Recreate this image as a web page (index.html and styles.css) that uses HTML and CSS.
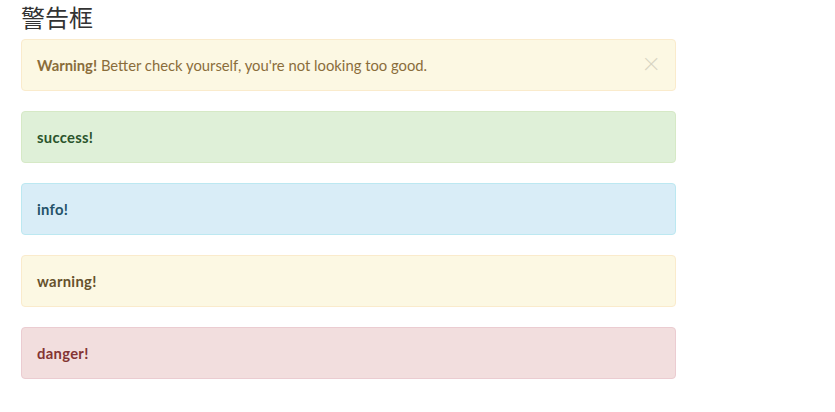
FILE: index.html
```html
<!DOCTYPE html>
<html>
<head>
<meta charset="utf-8">
<link rel="stylesheet" href="styles.css">
</head>
<body>
<div class="container">
  <h3 class="title">警告框</h3>
  <div class="alert alert-warning dismissible">
    <button class="close" type="button">×</button>
    <strong>Warning!</strong> Better check yourself, you're not looking too good.
  </div>
  <div class="alert alert-success"><a class="alert-link">success!</a></div>
  <div class="alert alert-info"><a class="alert-link">info!</a></div>
  <div class="alert alert-warning"><a class="alert-link">warning!</a></div>
  <div class="alert alert-danger"><a class="alert-link">danger!</a></div>
</div>
</body>
</html>
```
FILE: styles.css
```css
html, body { margin: 0; padding: 0; background: #fff; }
body {
  font-family: Lato, "Noto Sans CJK SC", sans-serif;
  font-size: 14.8px;
  line-height: 20px;
  color: #333;
}
.container {
  width: 655px;
  padding: 0 0 0 21px;
}
.title {
  font-family: "Noto Sans CJK SC", sans-serif;
  font-weight: 400;
  font-size: 24px;
  line-height: 34px;
  margin: 0 0 5px 0;
  color: #333;
}
.alert {
  padding: 15px;
  border: 1px solid transparent;
  border-radius: 4px;
  margin-bottom: 20px;
}
.alert-link { font-weight: 700; letter-spacing: 0.3px; }
.dismissible { padding-right: 35px; position: relative; }
.close {
  position: absolute;
  right: 15px;
  top: 12px;
  background: none;
  border: 0;
  padding: 0;
  font-family: Lato, sans-serif;
  font-size: 30px;
  line-height: 20px;
  font-weight: 300;
  color: #000;
  opacity: 0.14;
  cursor: pointer;
}
.alert strong { font-weight: 700; }
.alert-warning { background: #fcf8e3; border-color: #faebcc; color: #8a6d3b; }
.alert-warning .alert-link { color: #66512c; }
.alert-success { background: #dff0d8; border-color: #d6e9c6; color: #3c763d; }
.alert-success .alert-link { color: #2b542c; }
.alert-info { background: #d9edf7; border-color: #bce8f1; color: #31708f; }
.alert-info .alert-link { color: #245269; }
.alert-danger { background: #f2dede; border-color: #ebccd1; color: #a94442; }
.alert-danger .alert-link { color: #843534; }
```
